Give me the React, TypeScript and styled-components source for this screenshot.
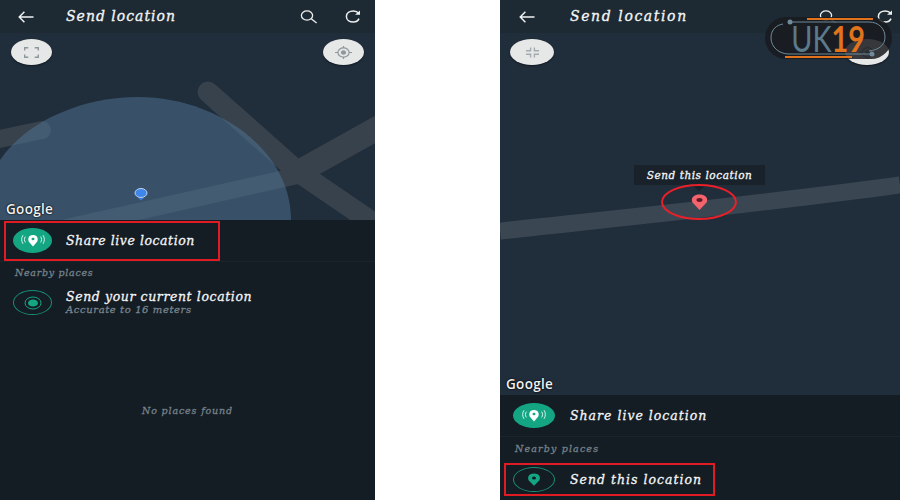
import React from "react";
import styled, { createGlobalStyle } from "styled-components";

const GlobalStyle = createGlobalStyle`
    html, body { margin: 0; padding: 0; background: #fff; }
    body { width: 900px; height: 500px; overflow: hidden; font-family: "DejaVu Serif", serif; }
`;

const Page = styled.div`
    display: flex;
    justify-content: space-between;
    width: 900px;
    height: 500px;
`;

const Phone = styled.div<{ $w: number }>`
    display: flex;
    flex-direction: column;
    position: relative;
    width: ${p => p.$w}px;
    height: 500px;
    background: #141c24;
    overflow: hidden;
`;

const Toolbar = styled.div<{ $left: number }>`
    display: flex;
    align-items: center;
    flex: 0 0 33px;
    height: 33px;
    padding-left: ${p => p.$left}px;
    background: #1e2a33;
    color: #fff;
`;

const Hand = styled.span`
    font-family: "DejaVu Serif", serif;
    font-style: italic;
    color: #f4f6f6;
    white-space: nowrap;
    -webkit-text-stroke: 0.3px currentColor;
`;

const Title = styled(Hand)<{ $ml: number; $spacing: number }>`
    margin-left: ${p => p.$ml}px;
    font-size: 14px;
    line-height: 30px;
    padding-bottom: 1px;
    letter-spacing: ${p => p.$spacing}px;
`;

const ToolIcons = styled.div<{ $gap: number; $right: number }>`
    display: flex;
    align-items: center;
    gap: ${p => p.$gap}px;
    margin-left: auto;
    margin-right: ${p => p.$right}px;
`;

const Map = styled.div<{ $h: number }>`
    position: relative;
    flex: 0 0 ${p => p.$h}px;
    height: ${p => p.$h}px;
    background: #202d3b;
    overflow: hidden;
    svg.ground {
        display: block;
        width: 100%;
        height: 100%;
    }
`;

const RoundBtn = styled.div<{ $side: "left" | "right"; $off: number; $w: number }>`
    position: absolute;
    top: 6px;
    ${p => p.$side}: ${p => p.$off}px;
    display: flex;
    align-items: center;
    justify-content: center;
    width: ${p => p.$w}px;
    height: 26px;
    border-radius: 50%;
    background: #e6e8e8;
    box-shadow: 0 1px 2px rgba(0, 0, 0, 0.45);
`;

const GoogleMark = styled.span`
    position: absolute;
    left: 6px;
    bottom: 2px;
    font-family: "Open Sans", sans-serif;
    font-size: 13.5px;
    font-weight: 600;
    line-height: 18px;
    letter-spacing: 0.3px;
    color: #f2f2f2;
    text-shadow: 0 0 2px #000, 0 0 1px #000;
`;

const Tooltip = styled.div`
    position: absolute;
    left: 134px;
    top: 132px;
    display: flex;
    align-items: center;
    justify-content: center;
    width: 131px;
    height: 20px;
    background: #19222a;
    &::after {
        content: "";
        position: absolute;
        left: 58px;
        top: 20px;
        border-left: 7px solid transparent;
        border-right: 7px solid transparent;
        border-top: 6px solid #19222a;
    }
`;

const TipText = styled(Hand)`
    font-size: 10.5px;
    letter-spacing: 0.55px;
`;

const PinMark = styled.div`
    position: absolute;
    left: 161px;
    top: 151px;
    width: 76px;
    height: 36px;
    box-sizing: border-box;
    display: flex;
    align-items: center;
    justify-content: center;
    border: 2px solid #e8202a;
    border-radius: 50%;
`;

const Row = styled.div<{ $h: number; $pad: number; $line?: boolean; $mt?: number }>`
    display: flex;
    align-items: center;
    height: ${p => p.$h}px;
    flex: 0 0 ${p => p.$h}px;
    margin-top: ${p => p.$mt ?? 0}px;
    border-bottom: ${p => (p.$line ? "1px solid #1a242c" : "none")};
    box-sizing: border-box;
    padding-left: ${p => p.$pad}px;
`;

const Highlight = styled.div<{ $w: number; $h: number }>`
    display: flex;
    align-items: center;
    box-sizing: border-box;
    width: ${p => p.$w}px;
    height: ${p => p.$h}px;
    padding-left: 7px;
    border: 2px solid #e01b24;
`;

const IconEllipse = styled.div<{ $outline?: boolean; $w: number }>`
    display: flex;
    align-items: center;
    justify-content: center;
    flex: 0 0 ${p => p.$w}px;
    width: ${p => p.$w}px;
    height: 25px;
    border-radius: 50%;
    box-sizing: border-box;
    background: ${p => (p.$outline ? "transparent" : "#14a583")};
    border: ${p => (p.$outline ? "1px solid #1a8f75" : "none")};
`;

const RowText = styled.div<{ $ml: number }>`
    display: flex;
    flex-direction: column;
    margin-left: ${p => p.$ml}px;
`;

const RowTitle = styled(Hand)<{ $spacing: number }>`
    font-size: 12.5px;
    line-height: 14px;
    letter-spacing: ${p => p.$spacing}px;
`;

const RowSub = styled(Hand)`
    font-size: 10px;
    line-height: 11px;
    letter-spacing: 0.6px;
    color: #77848c;
`;

const Section = styled(Hand)<{ $mt: number; $spacing: number }>`
    display: block;
    margin: ${p => p.$mt}px 0 0 15px;
    font-size: 9.5px;
    line-height: 12px;
    letter-spacing: ${p => p.$spacing}px;
    color: #75828a;
`;

const CurrentRow = styled.div`
    display: flex;
    align-items: center;
    margin-top: 11px;
    padding-left: 13px;
`;

const Empty = styled(Hand)`
    display: block;
    margin: 90px 0 0 142px;
    font-size: 9.5px;
    line-height: 12px;
    letter-spacing: 0.85px;
    color: #75828a;
`;

const Logo = styled.div`
    position: absolute;
    left: 265px;
    top: 17px;
    width: 127px;
    height: 42px;
    display: flex;
    align-items: center;
    justify-content: center;
    border-radius: 21px;
    background: rgba(24, 27, 31, 0.86);
    svg {
        position: absolute;
        left: 0;
        top: 0;
    }
`;

const LogoWord = styled.div`
    position: relative;
    display: flex;
    transform: scaleX(0.8);
    line-height: 42px;
    font-family: "Lato", sans-serif;
    font-size: 36px;
`;

const LogoPart = styled.span<{ $color: string; $weight: number }>`
    color: ${p => p.$color};
    font-weight: ${p => p.$weight};
`;

const BackIcon = () => (
    <svg width="16" height="12" viewBox="0 0 16 12" fill="none" stroke="#f2f4f4" strokeWidth="1.4">
        <path d="M15.5 6H1.2M6.4 .8 1.2 6l5.2 5.2" />
    </svg>
);

const SearchIcon = () => (
    <svg width="18" height="14" viewBox="0 0 18 14" fill="none" stroke="#eef0f0" strokeWidth="1.3">
        <ellipse cx="7" cy="5.5" rx="5.6" ry="4.6" />
        <path d="M11.2 8.8 16.6 13" />
    </svg>
);

const RefreshIcon = () => (
    <svg width="16" height="13" viewBox="0 0 16 13" fill="none" stroke="#eef0f0" strokeWidth="1.5">
        <path d="M13.6 3.2C12.4 1.6 10.6 1 8.4 1 4.6 1 1.4 3 1.4 6.5S4.6 12 8.4 12c2.8 0 4.6-1.2 5.6-3.4" />
        <path d="M15 .4v4.4h-5z" fill="#eef0f0" stroke="none" />
    </svg>
);

const ExpandIcon = () => (
    <svg width="15" height="11" viewBox="0 0 15 11" fill="none" stroke="#8e979c" strokeWidth="1.4">
        <path d="M.7 3.6V.7h3.6M10.7.7h3.6v2.9M14.3 7.4v2.9h-3.6M4.3 10.3H.7V7.4" />
    </svg>
);

const ShrinkIcon = () => (
    <svg width="15" height="11" viewBox="0 0 15 11" fill="none" stroke="#a2aaae" strokeWidth="1.4">
        <path d="M1 3.8h4.6V.4M9.4.4v3.4H14M14 7.2H9.400v3.400M5.600 10.600V7.200H1" />
    </svg>
);

const TargetIcon = () => (
    <svg width="17" height="13" viewBox="0 0 17 13" fill="none" stroke="#8e979c" strokeWidth="1.2">
        <ellipse cx="8.5" cy="6.5" rx="5.6" ry="4.6" />
        <ellipse cx="8.5" cy="6.5" rx="2.6" ry="2.2" fill="#8e979c" stroke="none" />
        <path d="M8.5 0v2M8.5 11v2M0 6.5h3M14 6.5h3" />
    </svg>
);

const LiveIcon = () => (
    <svg width="24" height="13" viewBox="0 0 24 13" fill="none" stroke="#d5f3ea" strokeWidth="1">
        <path d="M12 12.600 7.900 7.700C6.600 5.800 7 1 12 1s5.400 4.800 4.100 6.700z" fill="#fff" stroke="none" />
        <ellipse cx="12" cy="5" rx="1.500" ry="1.200" fill="#14a583" stroke="none" />
        <path d="M4.400 2.600C3.100 4.400 3.100 6.600 4.400 8.400M2 1.200C.2 3.800.2 7.200 2 9.800M19.600 2.600c1.300 1.800 1.300 4 0 5.800M22 1.200c1.800 2.600 1.800 6 0 8.600" />
    </svg>
);

const GreenPin = () => (
    <svg width="14" height="13" viewBox="0 0 14 13">
        <path d="M7 12.800 1.800 7.400C.3 5.400.9.600 7 .6s6.700 4.800 5.200 6.800z" fill="#14a583" />
        <ellipse cx="7" cy="5" rx="2" ry="1.600" fill="#141c24" />
    </svg>
);

const CurrentDot = () => (
    <svg width="18" height="14" viewBox="0 0 18 14">
        <ellipse cx="9" cy="7" rx="8" ry="6" fill="none" stroke="#14a583" strokeWidth="1" />
        <ellipse cx="9" cy="7" rx="5" ry="3.600" fill="#14a583" />
    </svg>
);

const RedPin = () => (
    <svg width="17" height="16" viewBox="0 0 17 16">
        <path d="M8.500 16 1.700 8.700C-.6 5.500 1.500.5 8.500.5s9.100 5 6.800 8.200z" fill="#f3646c" />
        <ellipse cx="8.500" cy="6" rx="3" ry="1.900" fill="#5a1a26" />
    </svg>
);

const LeftGround = () => (
    <svg className="ground" viewBox="0 0 375 187">
        <g fill="none" stroke="#38424c">
            <path d="M208 59 297 138 385 198" strokeWidth="21" strokeLinecap="round" />
            <path d="M297 140 385 91" strokeWidth="24" />
            <path d="M-10 108 42 97" strokeWidth="18" strokeLinecap="round" />
            <path d="M60 196 300 142" strokeWidth="17" />
        </g>
        {/* accuracy circle is see-through, the roads show under it */}
        <path d="M0 127C28 86 85 64 138 64c78 0 153 52 153 123H0z" fill="#507595" fillOpacity=".5" />
        <ellipse cx="141" cy="160" rx="6" ry="4.500" fill="#3f86ea" stroke="#bcd4ee" strokeWidth="1" />
        <path d="M138 165h6l-3 2.500z" fill="#3a78d8" />
    </svg>
);

const RightGround = () => (
    <svg className="ground" viewBox="0 0 400 362">
        <path d="M0 198C130 184 270 170 400 152" fill="none" stroke="#3a4651" strokeWidth="17" />
    </svg>
);

const LogoRails = () => (
    <svg width="127" height="42" viewBox="0 0 127 42" fill="none">
        <path d="M42 2H108M20 40H87" stroke="#e0731c" strokeWidth="2" />
        <path d="M25 5H104C114 5 120 12 120 20S114 33 104 34" stroke="#6f8a9a" strokeWidth="1" />
        <path d="M107 37H24C14 37 6 30 6 21S12 8 18 7" stroke="#6f8a9a" strokeWidth="1" />
        <circle cx="25" cy="5" r="2.500" fill="#6f8a9a" />
        <circle cx="107" cy="37" r="2.500" fill="#6f8a9a" />
    </svg>
);

export default function App() {
    return (
        <Page>
            <GlobalStyle />
            <Phone $w={375}>
                <Toolbar $left={18}>
                    <BackIcon />
                    <Title $ml={32} $spacing={1}>Send location</Title>
                    <ToolIcons $gap={27} $right={14}>
                        <SearchIcon />
                        <RefreshIcon />
                    </ToolIcons>
                </Toolbar>
                <Map $h={187}>
                    <LeftGround />
                    <RoundBtn $side="left" $off={11} $w={41}><ExpandIcon /></RoundBtn>
                    <RoundBtn $side="right" $off={11} $w={41}><TargetIcon /></RoundBtn>
                    <GoogleMark>Google</GoogleMark>
                </Map>
                <Row $h={42} $pad={4} $line>
                    <Highlight $w={216} $h={40}>
                        <IconEllipse $w={39}><LiveIcon /></IconEllipse>
                        <RowText $ml={14}><RowTitle $spacing={0.55}>Share live location</RowTitle></RowText>
                    </Highlight>
                </Row>
                <Section $mt={5} $spacing={0.7}>Nearby places</Section>
                <CurrentRow>
                    <IconEllipse $w={39} $outline><CurrentDot /></IconEllipse>
                    <RowText $ml={14}>
                        <RowTitle $spacing={0.6}>Send your current location</RowTitle>
                        <RowSub>Accurate to 16 meters</RowSub>
                    </RowText>
                </CurrentRow>
                <Empty>No places found</Empty>
            </Phone>
            <Phone $w={400}>
                <Toolbar $left={19}>
                    <BackIcon />
                    <Title $ml={35} $spacing={1.6}>Send location</Title>
                    <ToolIcons $gap={40} $right={7}>
                        <SearchIcon />
                        <RefreshIcon />
                    </ToolIcons>
                </Toolbar>
                <Map $h={362}>
                    <RightGround />
                    <RoundBtn $side="left" $off={10} $w={44}><ShrinkIcon /></RoundBtn>
                    <RoundBtn $side="right" $off={11} $w={44}><TargetIcon /></RoundBtn>
                    <Tooltip><TipText>Send this location</TipText></Tooltip>
                    <PinMark><RedPin /></PinMark>
                    <GoogleMark>Google</GoogleMark>
                </Map>
                <Row $h={42} $pad={13} $line>
                    <IconEllipse $w={42}><LiveIcon /></IconEllipse>
                    <RowText $ml={15}><RowTitle $spacing={1}>Share live location</RowTitle></RowText>
                </Row>
                <Section $mt={6} $spacing={1.15}>Nearby places</Section>
                <Row $h={33} $pad={4} $mt={8}>
                    <Highlight $w={211} $h={33}>
                        <IconEllipse $w={42} $outline><GreenPin /></IconEllipse>
                        <RowText $ml={15}><RowTitle $spacing={1}>Send this location</RowTitle></RowText>
                    </Highlight>
                </Row>
                <Logo>
                    <LogoRails />
                    <LogoWord>
                        <LogoPart $color="#5b7a8c" $weight={400}>UK</LogoPart>
                        <LogoPart $color="#e0731c" $weight={700}>19</LogoPart>
                    </LogoWord>
                </Logo>
            </Phone>
        </Page>
    );
}
